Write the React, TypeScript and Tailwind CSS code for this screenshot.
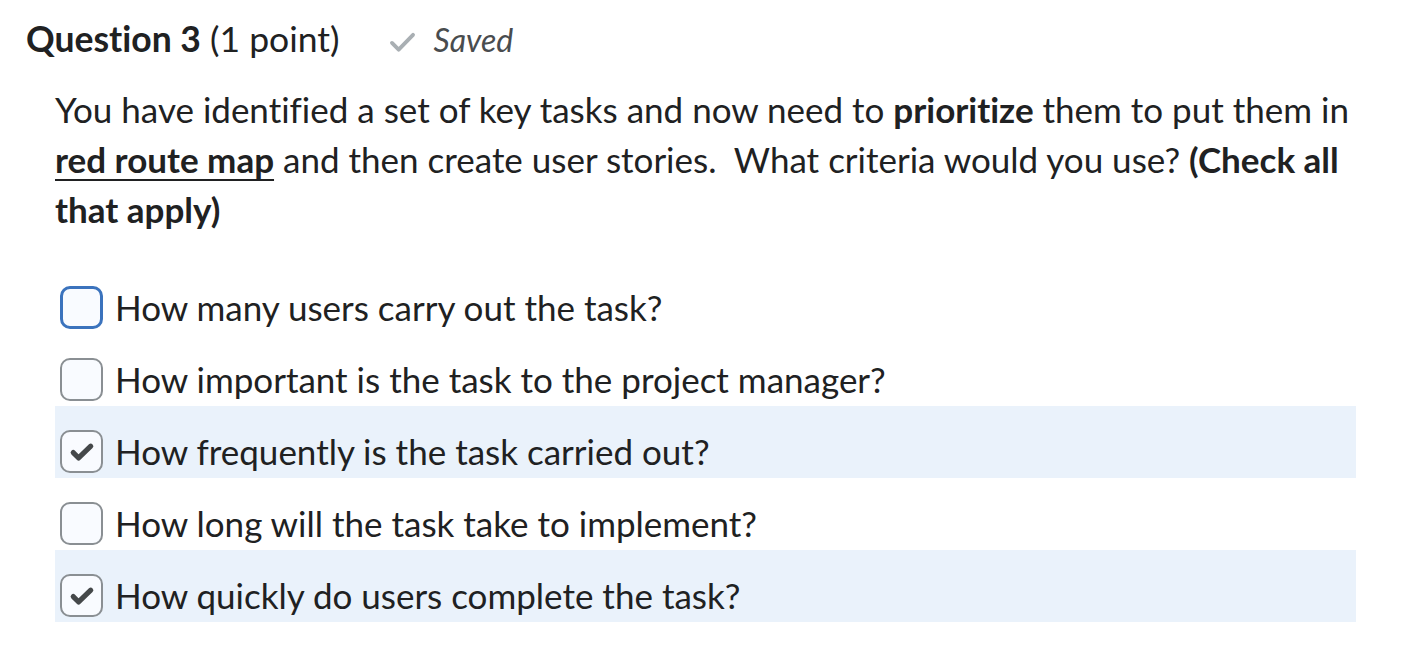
import React from "react";

const options = [
  { label: "How many users carry out the task?", checked: false, focused: true },
  { label: "How important is the task to the project manager?", checked: false, focused: false },
  { label: "How frequently is the task carried out?", checked: true, focused: false },
  { label: "How long will the task take to implement?", checked: false, focused: false },
  { label: "How quickly do users complete the task?", checked: true, focused: false },
];

function Checkbox({ checked, focused }: { checked: boolean; focused: boolean }) {
  return (
    <span
      className={
        focused
          ? "flex h-[43px] w-[43px] shrink-0 items-center justify-center rounded-[10px] border-[3px] border-[#3b73bd] bg-[#f9fbff]"
          : "flex h-[43px] w-[43px] shrink-0 items-center justify-center rounded-[10px] border-2 border-[#8a8f93] bg-[#f9fbff]"
      }
    >
      {checked && (
        <svg width="28" height="28" viewBox="0 0 24 24" fill="none">
          <path d="M4.5 12.5l4.6 4.6L19.5 7" stroke="#45484a" strokeWidth="4.4" strokeLinecap="round" strokeLinejoin="round" />
        </svg>
      )}
    </span>
  );
}

export default function App() {
  return (
    <main className="min-h-screen bg-white pt-[16px] text-[#202122] [font-family:Lato,'Noto_Sans',sans-serif] [font-variant-ligatures:none]">
      <header className="flex items-baseline pl-[26px]">
        <h2 className="text-[35.5px] leading-[44px]">
          <span className="font-bold">Question 3</span> (1 point)
        </h2>
        <span className="ml-[50px] flex items-baseline gap-[17px] text-[32px] italic text-[#494c4e]">
          <svg className="relative top-[2px]" width="27" height="23" viewBox="0 0 28 24" fill="none">
            <path d="M3 12.5l7 7L25 4" stroke="#a9afb3" strokeWidth="4" strokeLinecap="round" strokeLinejoin="round" />
          </svg>
          Saved
        </span>
      </header>

      <p className="mt-[20px] w-[1355px] pl-[55px] text-[35px] leading-[50px]">
        You have identified a set of key tasks and now need to <strong>prioritize</strong> them to put them in{" "}
        <strong className="underline decoration-2 underline-offset-[6px]">red route map</strong> and then create user stories.&nbsp; What
        criteria would you use? <strong>(Check all that apply)</strong>
      </p>

      <ul className="ml-[55px] mt-[28px] w-[1301px]">
        {options.map((o) => (
          <li
            key={o.label}
            className={
              o.checked
                ? "flex h-[72px] items-end gap-[12px] bg-[#eaf2fb] pb-[5px] pl-[5px] text-[35px] leading-[43px]"
                : "flex h-[72px] items-end gap-[12px] pb-[5px] pl-[5px] text-[35px] leading-[43px]"
            }
          >
            <Checkbox checked={o.checked} focused={o.focused} />
            <span>{o.label}</span>
          </li>
        ))}
      </ul>
    </main>
  );
}
